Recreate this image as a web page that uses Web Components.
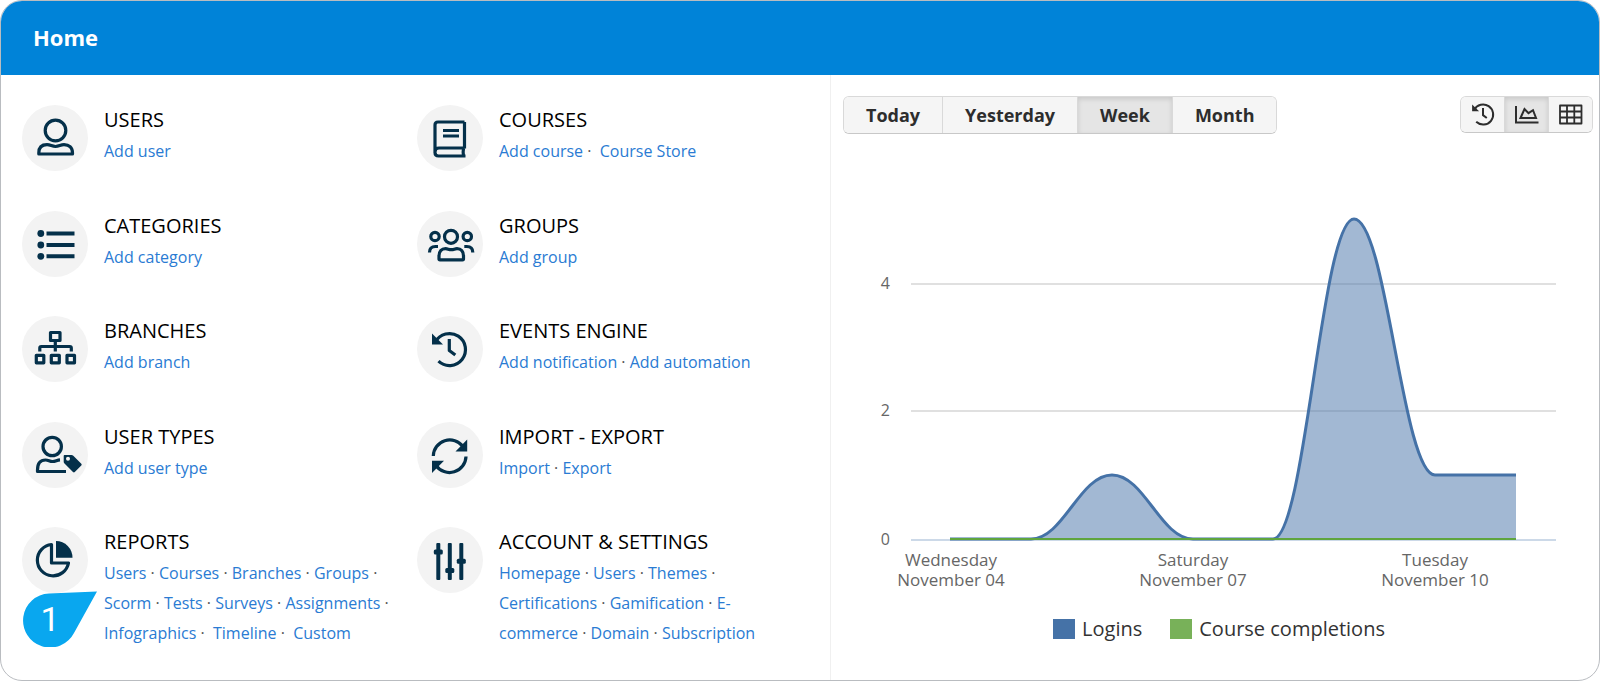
<!DOCTYPE html>
<html lang="en">
<head>
<meta charset="utf-8">
<title>Home</title>
<style>
  body { margin: 0; background: #fff; font-family: "Open Sans", "Noto Sans", sans-serif; color: #000; }
</style>
</head>
<body>
<home-page></home-page>

<template id="home-page">
  <style>
    :host { display: block; }
    .card { box-sizing: border-box; min-height: 100vh; display: flex; flex-direction: column; border: 1px solid #b9bcc0; border-radius: 22px; overflow: hidden; background: #fff; }
    header { box-sizing: border-box; display: flex; align-items: center; height: 74px; padding: 0 32px 2px; background: #0083d8; color: #fff; }
    h1 { margin: 0; font-size: 22px; line-height: 30px; font-weight: 700; }
    main { flex: 1; display: grid; grid-template-columns: 829fr 769fr; }
    nav { display: grid; grid-template-columns: repeat(2, 1fr); align-content: space-between; padding: 30px 18px 32px 21px; }
    section { border-left: 1px solid #f0f0f0; min-width: 0; }
    .bar { display: flex; justify-content: space-between; align-items: flex-start; padding: 21px 6px 0 12px; }
  </style>
  <div class="card">
    <header><h1>Home</h1></header>
    <main>
      <nav aria-label="Administration">
        <menu-item icon="user" heading="USERS"><a href="#">Add user</a></menu-item>
        <menu-item icon="book" heading="COURSES"><a href="#">Add course</a> ·&nbsp; <a href="#">Course Store</a></menu-item>
        <menu-item icon="list" heading="CATEGORIES"><a href="#">Add category</a></menu-item>
        <menu-item icon="group" heading="GROUPS"><a href="#">Add group</a></menu-item>
        <menu-item icon="tree" heading="BRANCHES"><a href="#">Add branch</a></menu-item>
        <menu-item icon="history" heading="EVENTS ENGINE"><a href="#">Add notification</a> · <a href="#">Add automation</a></menu-item>
        <menu-item icon="usertag" heading="USER TYPES"><a href="#">Add user type</a></menu-item>
        <menu-item icon="sync" heading="IMPORT - EXPORT"><a href="#">Import</a> · <a href="#">Export</a></menu-item>
        <menu-item icon="pie" heading="REPORTS"><a href="#">Users</a> · <a href="#">Courses</a> · <a href="#">Branches</a> · <a href="#">Groups</a> · <a href="#">Scorm</a> · <a href="#">Tests</a> · <a href="#">Surveys</a> · <a href="#">Assignments</a> · <a href="#">Infographics</a> ·&nbsp; <a href="#">Timeline</a> ·&nbsp; <a href="#">Custom</a><step-marker slot="marker">1</step-marker></menu-item>
        <menu-item icon="sliders" heading="ACCOUNT &amp; SETTINGS"><a href="#">Homepage</a> · <a href="#">Users</a> · <a href="#">Themes</a> · <a href="#">Certifications</a> · <a href="#">Gamification</a> · <a href="#">E-commerce</a> · <a href="#">Domain</a> · <a href="#">Subscription</a></menu-item>
      </nav>
      <section aria-label="Activity">
        <div class="bar">
          <button-group>
            <group-button>Today</group-button><group-button>Yesterday</group-button><group-button active>Week</group-button><group-button>Month</group-button>
          </button-group>
          <button-group>
            <group-button icon="history" label="Timeline"></group-button><group-button icon="area" label="Chart" active></group-button><group-button icon="table" label="Table"></group-button>
          </button-group>
        </div>
        <activity-chart></activity-chart>
      </section>
    </main>
  </div>
</template>

<template id="menu-item">
  <style>
    :host { display: grid; grid-template-columns: 66px 1fr; column-gap: 16px; padding-right: 22px; position: relative; align-items: start; }
    .disc { width: 66px; height: 66px; border-radius: 50%; background: #f3f3f3; color: #04304a; }
    svg { display: block; width: 66px; height: 66px; }
    h2 { margin: 0 0 1px; font-size: 20px; line-height: 30px; font-weight: 400; color: #000; }
    p { margin: 0; font-size: 16px; line-height: 30px; color: #555; }
    ::slotted(a) { color: #2a7bd3; text-decoration: none; }
  </style>
  <div class="disc"></div>
  <div><h2></h2><p><slot></slot></p></div>
  <slot name="marker"></slot>
</template>

<template id="step-marker">
  <style>
    :host { display: block; position: absolute; left: 1px; top: 64px; width: 75px; height: 56px; }
    svg { position: absolute; inset: 0; }
    span { position: relative; display: block; width: 54px; font: 400 34px/56px Roboto, sans-serif; color: #fff; text-align: center; }
  </style>
  <svg width="75" height="56" viewBox="0 0 75 56" aria-hidden="true"><path fill="#09a7ef" d="M74 .5L51 42A27 27 0 1 1 26 2.500Z"/></svg>
  <span><slot></slot></span>
</template>

<template id="button-group">
  <style>
    :host { display: flex; border: 1px solid #d9d9d9; border-bottom-color: #c8c8c8; border-radius: 6px; overflow: hidden; }
    ::slotted(:not(:first-child)) { border-left: 1px solid #d9d9d9; }
  </style>
  <slot></slot>
</template>

<template id="group-button">
  <style>
    :host { display: block; }
    button { display: block; height: 36px; margin: 0; border: 0; padding: 0 22px; background: #f5f5f5; color: #2d2d2d; font: 700 18px/36px "Open Sans", sans-serif; cursor: pointer; }
    :host([active]) button { background: #e5e5e5; box-shadow: inset 0 2px 5px rgba(0,0,0,.13); }
    :host([icon]) button { height: 35px; padding: 0 8px; }
    svg { display: block; width: 27px; height: 27px; }
  </style>
  <button type="button"><slot></slot></button>
</template>

<template id="activity-chart">
  <style>
    :host { display: block; }
    svg { display: block; width: 100%; height: auto; }
    text { font-size: 16px; fill: #666; }
    text.day { font-size: 17px; }
    ul { display: flex; justify-content: center; gap: 28px; list-style: none; margin: 0; padding: 18px 0 0 8px; font-size: 20px; line-height: 28px; color: #333; }
    li { display: flex; align-items: center; gap: 7px; }
    li::before { content: ""; width: 22px; height: 20px; background: var(--swatch); }
  </style>
  <svg viewBox="0 -1 768 463" role="img" aria-label="Logins and course completions by day"></svg>
  <ul><li style="--swatch:#4572a7">Logins</li><li style="--swatch:#78b159">Course completions</li></ul>
</template>

<script>
  const S = 'fill="none" stroke="currentColor" stroke-width="3.200" stroke-linejoin="round"';
  const ICONS = {
    user: `<g ${S}><circle cx="33.500" cy="25.500" r="10.300"/><path d="M16.800 49V48C16.800 42.500 20 39.700 25 39.700C28.500 39.700 30 41.500 33.500 41.500S38.500 39.700 42 39.700C47 39.700 50.500 42.500 50.500 48V49Z"/></g>`,
    list: `<g fill="currentColor"><circle cx="18.800" cy="22.500" r="3.400"/><circle cx="18.800" cy="34" r="3.400"/><circle cx="18.800" cy="45.300" r="3.400"/><path d="M24.500 20.500h28v4h-28zM24.500 32h28v4h-28zM24.500 43.300h28v4h-28z"/></g>`,
    tree: `<g ${S}><path d="M28.500 16.500h9.500v8h-9.500zM14.300 39.300h7.500v7.500h-7.500zM29.300 39.300h8v7.500h-8zM45 39.300h7.500v7.500H45zM33.300 25v9.500M17.800 35.500V32q0-1.500 1.500-1.500h28.500q1.500 0 1.500 1.500v3.500M33.300 30v5.500"/></g>`,
    usertag: `<g ${S}><circle cx="30.200" cy="24.500" r="9.200"/><path d="M44 49.500H15.500V48C15.500 41.500 18.500 38 23.500 38C26.500 38 27.500 39.500 30.500 39.500S35 38 38 37.800"/></g><path fill="currentColor" fill-rule="evenodd" d="M42.500 33h7q1 0 1.800.8l8 8q.9.900 0 1.800l-6.500 6.500q-.9.900-1.800 0l-8.500-8.500q-.8-.8-.8-1.800V34q0-1 .8-1zM46 34.700a2 2 0 1 0 0 4a2 2 0 0 0 0-4z"/>`,
    pie: `<path fill="currentColor" d="M34 14A16.500 16.500 0 0 1 50.500 30.800H34Z"/><path ${S} d="M29.500 17.500A15.700 15.700 0 1 0 46.500 36H29.500Z"/>`,
    book: `<g ${S}><path d="M47.500 17H21q-3 0-3 3v28M47.500 17V43.500M18 47q0-4 4-4h25.500M18 47.500q0 3.500 3.500 3.500H48.500M46.500 43.500q-.8 4 0 7.500"/><path d="M26 25.500h16M26 31h16"/></g>`,
    group: `<g ${S}><circle cx="34" cy="25.800" r="6.500"/><circle cx="18" cy="25.500" r="4.200"/><circle cx="50.300" cy="25.500" r="4.200"/><path d="M22 48V45C22 40.500 24.500 37.700 28.500 37.700C31 37.700 31.500 38.700 34.300 38.700S37.500 37.700 40 37.700C44 37.700 46.500 40.500 46.500 45V48Q46.500 48.800 45.500 48.800H23Q22 48.800 22 48ZM12.500 41.500Q12.500 35.500 18.500 35.500H21M55.800 41.500Q55.800 35.500 49.800 35.500H47.300"/></g>`,
    history: `<path ${S} d="M18.400 26A16 16 0 1 1 21.500 45.200M32.300 23v11.500l6 4.500"/><path fill="currentColor" d="M15 17.500V28.500H26Z"/>`,
    sync: `<path ${S} d="M16.300 34A16.500 16.500 0 0 1 46 24.500M49 34.500A16.500 16.500 0 0 1 19 43.500"/><path fill="currentColor" d="M50.200 17.500V29.500H38.500ZM15 51V38.800H27Z"/>`,
    sliders: `<g fill="currentColor"><rect x="19.300" y="16" width="4" height="37" rx="1"/><rect x="30.800" y="16" width="4" height="37" rx="1"/><rect x="42.300" y="16" width="4" height="37" rx="1"/><rect x="16.800" y="22.500" width="9" height="5" rx="1.500"/><rect x="28.300" y="41" width="9" height="5" rx="1.500"/><rect x="39.800" y="31.800" width="9" height="5" rx="1.500"/></g>`,
    area: `<path fill="none" stroke="currentColor" stroke-width="2" d="M3 5v16.500H25.500M7.500 17l4-9 4 4.200 4.500-3L23 17Z"/>`,
    table: `<path fill="none" stroke="currentColor" stroke-width="1.800" stroke-linejoin="round" d="M3 4.500h21.500v18h-21.500zM3 10.500h21.500M3 16.500h21.500M10 4.500v18M17.300 4.500v18"/>`
  };
  const icon = (name, box) => `<svg viewBox="${box}" aria-hidden="true">${ICONS[name]}</svg>`;

  class Base extends HTMLElement {
    constructor() {
      super();
      this.attachShadow({ mode: 'open' }).append(document.getElementById(this.localName).content.cloneNode(true));
    }
    $(q) { return this.shadowRoot.querySelector(q); }
  }

  class MenuItem extends Base {
    connectedCallback() {
      this.$('.disc').innerHTML = icon(this.getAttribute('icon'), '0 0 66 66');
      this.$('h2').textContent = this.getAttribute('heading');
    }
  }

  class GroupButton extends Base {
    connectedCallback() {
      const name = this.getAttribute('icon'), button = this.$('button');
      if (this.hasAttribute('active')) button.setAttribute('aria-pressed', 'true');
      if (!name) return;
      button.setAttribute('aria-label', this.getAttribute('label'));
      button.innerHTML = icon(name, name === 'history' ? '10 12 43 43' : '0 0 27 27');
    }
  }

  class ActivityChart extends Base {
    connectedCallback() {
      const X0 = 119, DX = 81, Y0 = 404, DY = 64;
      const logins = [0, 0, 1, 0, 0, 5, 1, 1];
      const pts = logins.map((v, i) => [X0 + i * DX - (i > 3 ? 1 : 0), Y0 - v * DY]);
      const line = this.spline(pts), endX = pts[7][0];
      const grid = [[4, 149], [2, 276], [0, 405]].map(([v, y]) =>
        `<path d="M80 ${y}H725" stroke="${v ? '#e0e0e0' : '#ccd9e8'}" stroke-width="2"/><text x="59" y="${y + 5}" text-anchor="end">${v}</text>`).join('');
      const days = [['Wednesday', 'November 04', 120], ['Saturday', 'November 07', 362], ['Tuesday', 'November 10', 604]].map(([a, b, x]) =>
        `<text class="day" text-anchor="middle" y="431"><tspan x="${x}">${a}</tspan><tspan x="${x}" dy="20">${b}</tspan></text>`).join('');
      this.$('svg').innerHTML = grid +
        `<path d="${line}L${endX} ${Y0}L${X0} ${Y0}Z" fill="#4572a7" fill-opacity=".5"/>` +
        `<path d="${line}" fill="none" stroke="#4572a7" stroke-width="3" stroke-linejoin="round"/>` +
        `<path d="M${X0} ${Y0}H${endX}" stroke="#5fa53e" stroke-width="2"/>` + days;
    }
    /* Smooth curve that stays flat at local extremes. */
    spline(p) {
      let d = `M${p[0]}`, prev = p[0];
      for (let i = 1; i < p.length; i++) {
        const [lx, ly] = p[i - 1], [x, y] = p[i], next = p[i + 1];
        let left = [x, y], right = [x, y];
        if (next) {
          left = [(1.5 * x + lx) / 2.5, (1.5 * y + ly) / 2.5];
          right = [(1.5 * x + next[0]) / 2.5, (1.5 * y + next[1]) / 2.5];
          const c = (right[1] - left[1]) * (right[0] - x) / (right[0] - left[0]) + y - right[1];
          left[1] += c; right[1] += c;
          const clamp = (v, a, b) => Math.min(Math.max(v, Math.min(a, b)), Math.max(a, b));
          left[1] = clamp(left[1], ly, y); right[1] = 2 * y - left[1];
          right[1] = clamp(right[1], next[1], y); left[1] = 2 * y - right[1];
        }
        d += `C${prev} ${left} ${p[i]}`;
        prev = right;
      }
      return d;
    }
  }

  customElements.define('step-marker', class extends Base {});
  customElements.define('button-group', class extends Base {});
  customElements.define('group-button', GroupButton);
  customElements.define('menu-item', MenuItem);
  customElements.define('activity-chart', ActivityChart);
  customElements.define('home-page', class extends Base {});
</script>
</body>
</html>
